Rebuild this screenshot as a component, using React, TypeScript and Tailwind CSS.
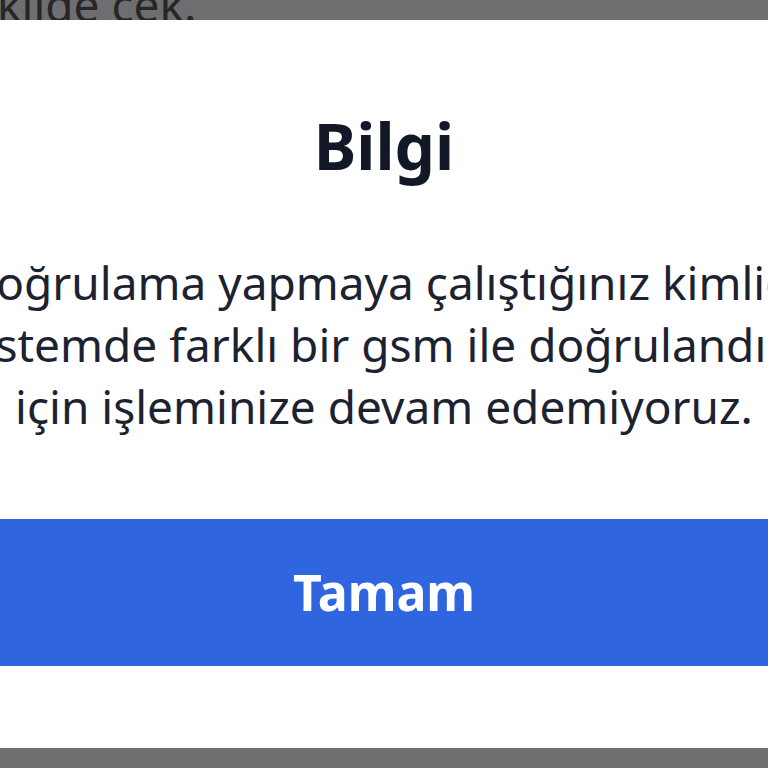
const font = { fontFamily: '"Noto Sans", "Open Sans", sans-serif' };

const App = () => {
  return (
    <div
      className="w-[768px] h-[768px] overflow-hidden bg-[#6e6e70] flex flex-col"
      style={font}
    >
      {/* page behind the dialog */}
      <div className="h-[20px] overflow-hidden shrink-0">
        <p className="text-[46px] leading-none text-[#262626] whitespace-nowrap -mt-[19px] -ml-[51px]">
          şekilde çek.
        </p>
      </div>

      {/* dialog */}
      <div className="h-[728px] shrink-0 bg-white flex flex-col items-center overflow-hidden">
        <h1 className="mt-[86px] text-[64px] leading-[80px] font-bold text-[#121826]">
          Bilgi
        </h1>
        <p className="mt-[65px] w-[940px] shrink-0 text-center text-[46px] leading-[62px] text-[#1c2230]">
          Doğrulama yapmaya çalıştığınız kimliği
          <br />
          sistemde farklı bir gsm ile doğrulandığı
          <br />
          için işleminize devam edemiyoruz.
        </p>
        <button className="mt-[82px] w-full h-[147px] shrink-0 bg-[#2f66e0] text-white text-[50px] font-bold">
          Tamam
        </button>
      </div>
    </div>
  );
};

export default App;
